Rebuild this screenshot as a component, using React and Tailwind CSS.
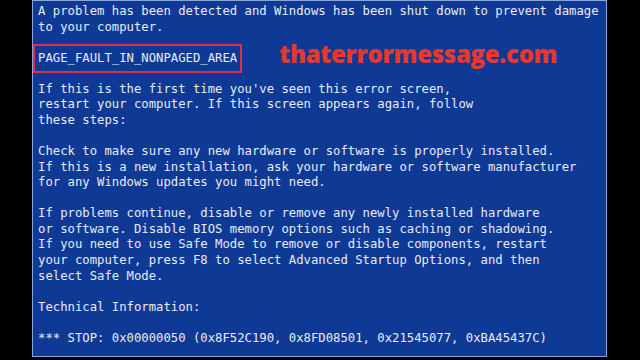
import React from "react";

const lines = [
  "A problem has been detected and Windows has been shut down to prevent damage",
  "to your computer.",
  "",
  "__PAGE__",
  "",
  "If this is the first time you've seen this error screen,",
  "restart your computer. If this screen appears again, follow",
  "these steps:",
  "",
  "Check to make sure any new hardware or software is properly installed.",
  "If this is a new installation, ask your hardware or software manufacturer",
  "for any Windows updates you might need.",
  "",
  "If problems continue, disable or remove any newly installed hardware",
  "or software. Disable BIOS memory options such as caching or shadowing.",
  "If you need to use Safe Mode to remove or disable components, restart",
  "your computer, press F8 to select Advanced Startup Options, and then",
  "select Safe Mode.",
  "",
  "Technical Information:",
  "",
  "*** STOP: 0x00000050 (0x8F52C190, 0x8FD08501, 0x21545077, 0xBA45437C)",
];

export default function App() {
  return (
    <div className="w-[640px] h-[360px] bg-black overflow-hidden">
      <div className="ml-[32px] w-[575px] h-[357px] bg-[#0e3a95] border border-[#8ea3d6] pt-[3px] pl-[5px] text-[#e8ebf3] text-[12.25px] leading-[15.57px] font-['DejaVu_Sans_Mono',monospace] whitespace-pre">
        {lines.map((l, i) =>
          l === "__PAGE__" ? (
            <div key={i} className="flex items-center h-[15.57px]">
              <span className="outline-2 outline-[#d9334c] px-[3px] -mx-[3px] py-[5px]">
                PAGE_FAULT_IN_NONPAGED_AREA
              </span>
              <span className="ml-[42px] text-[#e6382c] text-[24px] font-extrabold font-['Open_Sans',sans-serif] tracking-[-0.3px] leading-none -mt-[9px]">
                thaterrormessage.com
              </span>
            </div>
          ) : (
            <div key={i} className="h-[15.57px]">
              {l}
            </div>
          )
        )}
      </div>
    </div>
  );
}
